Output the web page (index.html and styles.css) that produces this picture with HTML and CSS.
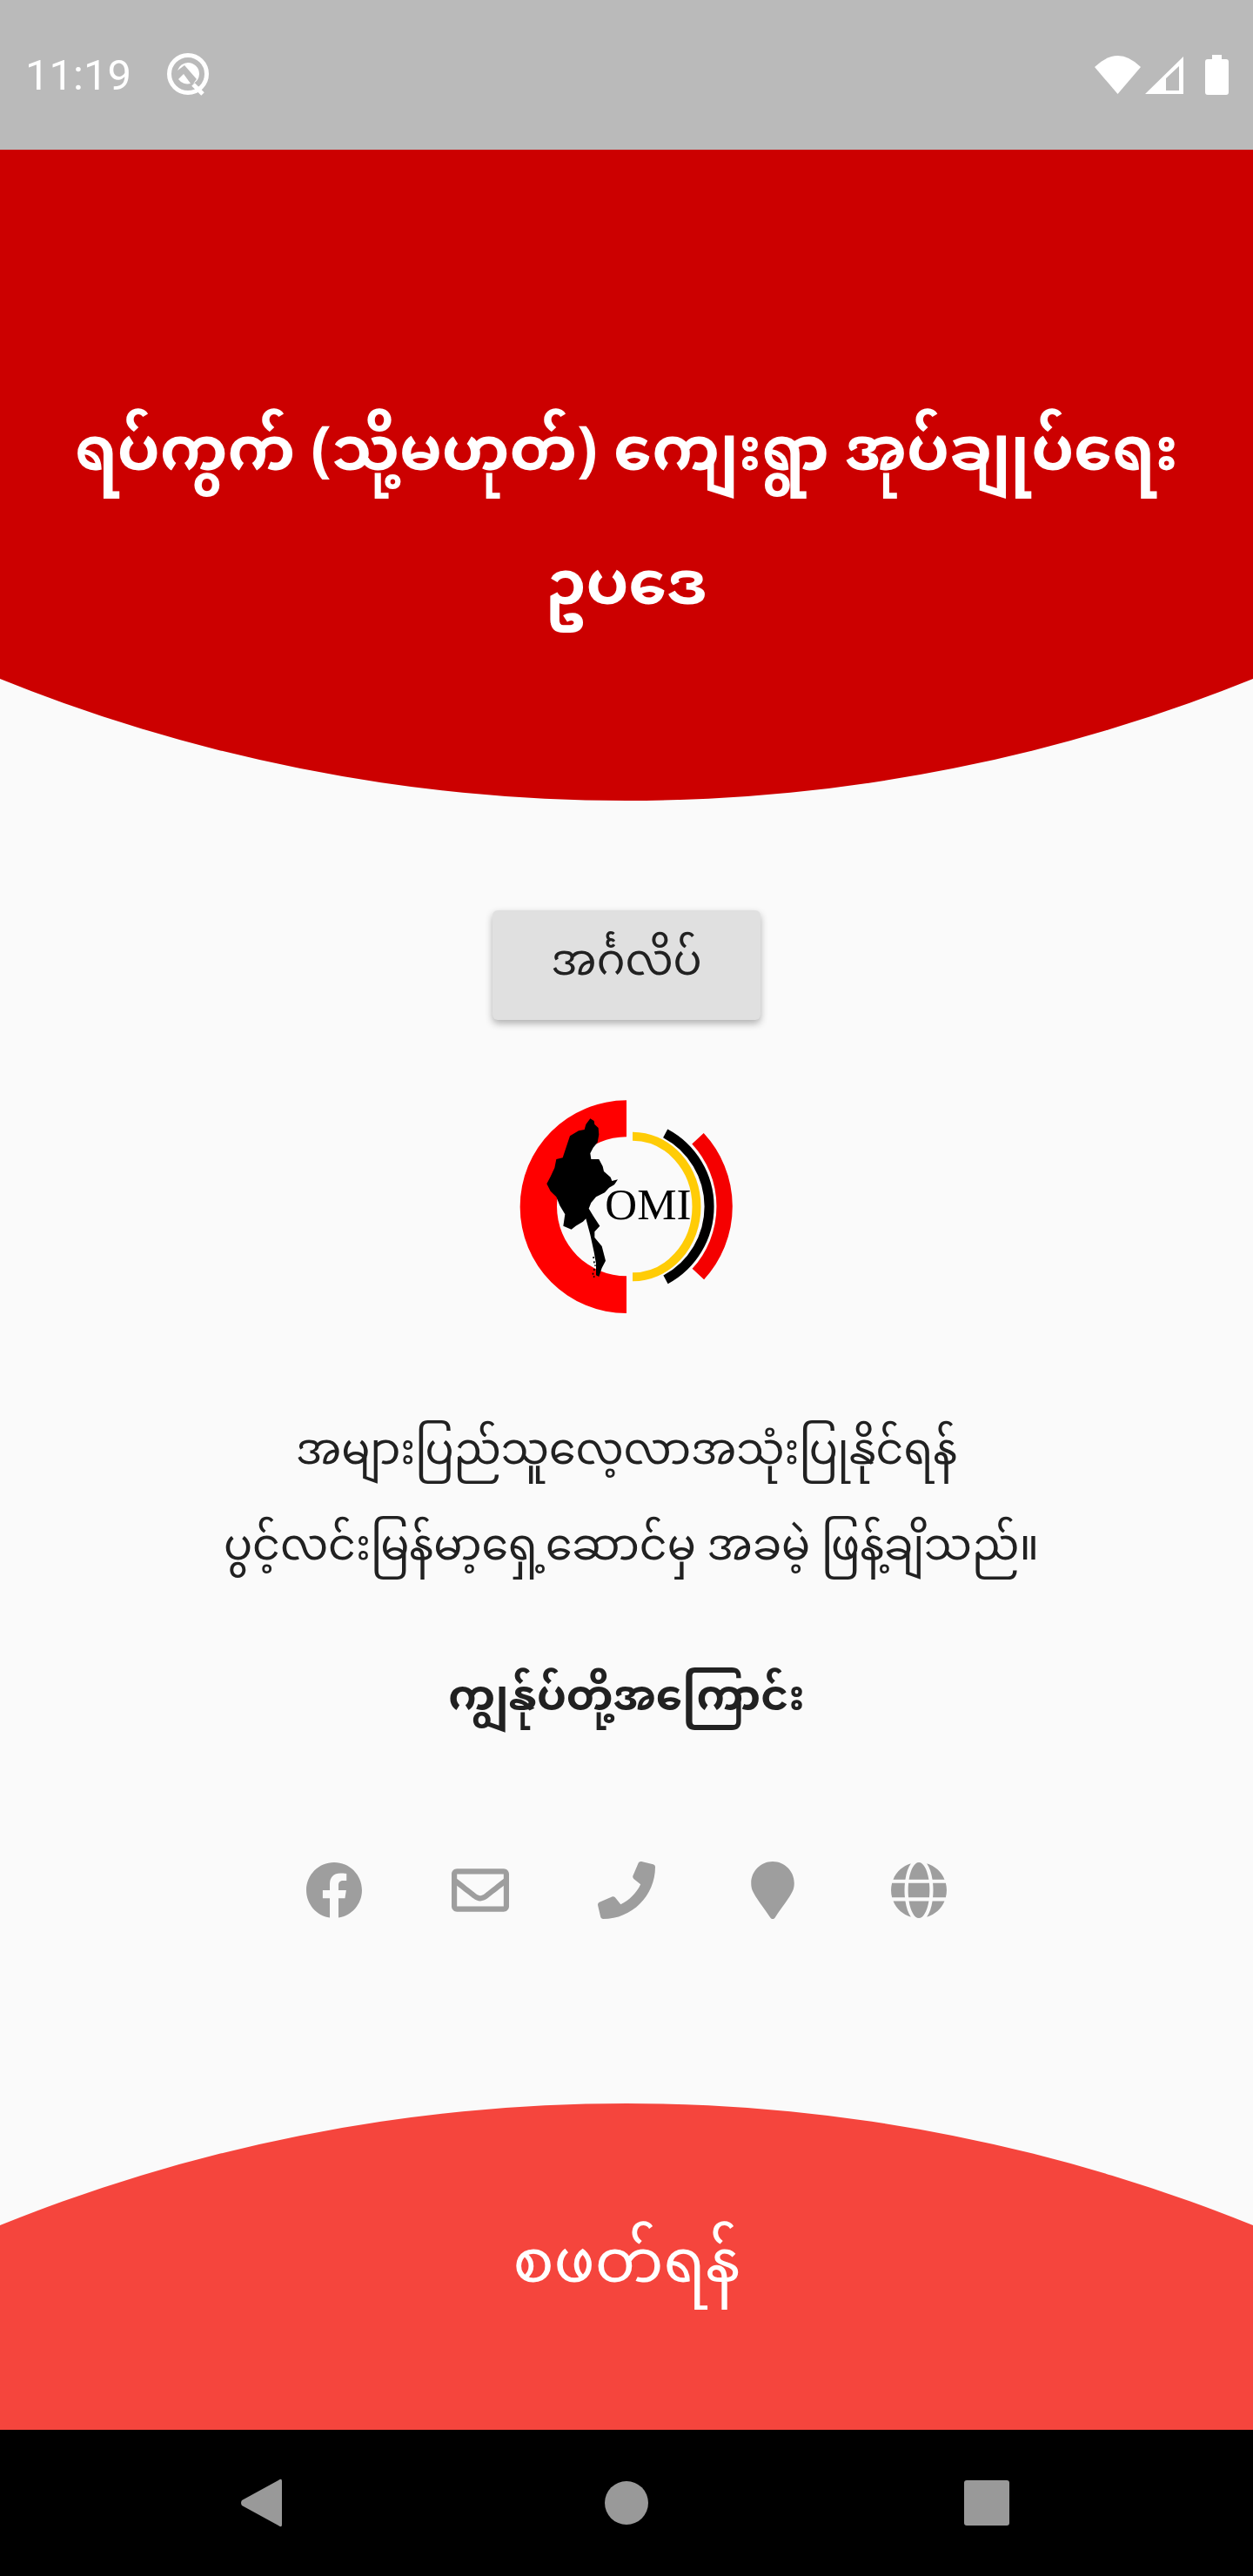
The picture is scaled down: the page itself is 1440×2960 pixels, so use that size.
FILE: index.html
```html
<!DOCTYPE html>
<html lang="my">
<head>
<meta charset="utf-8">
<title>OMI</title>
<link rel="stylesheet" href="styles.css">
</head>
<body>
<div class="screen">
  <div class="status">
    <span class="time">11:19</span>
    <svg class="sb-dnd" viewBox="0 0 48 50"><circle cx="24" cy="24" r="21.500" fill="none" stroke="#fff" stroke-width="5"/><path d="M30 36 L41 47" stroke="#fff" stroke-width="5"/><path d="M20 14 L34 30 L30 35 A13 13 0 0 0 37 24 A13 13 0 0 0 24 11 A13 13 0 0 0 12 20 Z" fill="#fff"/><path d="M13 30 L19 24 L27 35 A13 13 0 0 1 13 30 Z" fill="#fff"/></svg>
    <span class="spacer"></span>
    <svg class="sb-wifi" viewBox="0 0 53 44"><path d="M26.500 44 L0 13 Q26.500 -13 53 13 Z" fill="#fff"/></svg>
    <svg class="sb-signal" viewBox="0 0 44 43"><path fill-rule="evenodd" d="M44 0 V43 H0 Z M39 11 L24 25 V39 H39 Z" fill="#fff"/></svg>
    <svg class="sb-batt" viewBox="0 0 27 46"><path d="M8 0 H19 V5 H24 Q27 5 27 8 V43 Q27 46 24 46 H3 Q0 46 0 43 V8 Q0 5 3 5 H8 Z" fill="#fff"/></svg>
  </div>
  <header class="hero"><h1>ရပ်ကွက် (သို့မဟုတ်) ကျေးရွာ အုပ်ချုပ်ရေး ဥပဒေ</h1></header>
  <main class="content">
    <button class="lang">အင်္ဂလိပ်</button>
    <svg class="logo" viewBox="165 725 750 750">
      <path d="M540 732 A367 367 0 0 0 540 1466 V1338 A240 240 0 0 1 540 858 Z" fill="#ff0000"/>
      <path d="M561 856 A220 242 0 0 1 561 1341" fill="none" stroke="#ffcc06" stroke-width="30"/>
      <path d="M674 846 A286 286 0 0 1 675 1350" fill="none" stroke="#000" stroke-width="33"/>
      <path d="M786 864 A344 344 0 0 1 787 1331" fill="none" stroke="#f50000" stroke-width="55"/>
      <g transform="translate(240 765)" fill="#000">
        <path d="M175 30 L188 38 L190 50 L203 62 L205 85 L200 112 L185 130 L175 150 L178 170 L205 170 L218 195 L222 212 L245 232 L250 245 L270 240 L258 258 L240 268 L225 285 L195 300 L178 320 L170 340 L185 365 L208 400 L190 420 L190 440 L215 470 L228 520 L215 545 L205 575 L195 570 L195 530 L188 490 L175 430 L160 375 L150 385 L125 400 L110 412 L82 400 L88 360 L70 330 L58 300 L38 280 L25 255 L38 230 L52 200 L58 170 L80 165 L95 120 L105 90 L135 72 L155 68 L160 50 Z"/>
        <rect x="184" y="506" width="5" height="6"/><rect x="186" y="522" width="5" height="6"/><rect x="190" y="534" width="4" height="5"/><rect x="186" y="548" width="5" height="6"/><rect x="182" y="562" width="5" height="6"/><rect x="186" y="572" width="4" height="6"/>
      </g>
      <text x="466" y="1143" class="logo-text">OMI</text>
    </svg>
    <p class="intro">အများပြည်သူလေ့လာအသုံးပြုနိုင်ရန်<span class="intro-line">ပွင့်လင်းမြန်မာ့ရှေ့ဆောင်မှ အခမဲ့ ဖြန့်ချိသည်။</span></p>
    <h2 class="about">ကျွန်ုပ်တို့အကြောင်း</h2>
    <nav class="links">
      <svg viewBox="0 0 512 512"><path d="M504 256C504 119 393 8 256 8S8 119 8 256c0 123.800 90.700 226.400 209.300 245V327.700h-63V256h63v-54.600c0-62.200 37-96.500 93.700-96.500 27.100 0 55.500 4.800 55.500 4.800v61h-31.300c-30.800 0-40.400 19.100-40.400 38.700V256h68.800l-11 71.700h-57.800V501C413.300 482.400 504 379.800 504 256z"/></svg>
      <svg viewBox="0 0 512 512"><path d="M464 64H48C21.500 64 0 85.500 0 112v288c0 26.500 21.500 48 48 48h416c26.500 0 48-21.500 48-48V112c0-26.500-21.500-48-48-48zm0 48v40.800c-22.400 18.300-58.200 46.700-134.600 106.500-16.800 13.200-50.200 45.100-73.400 44.700-23.200.4-56.600-31.500-73.400-44.700C106.200 199.500 70.400 171.100 48 152.800V112h416zM48 400V214.400c22.900 18.300 55.400 43.900 104.900 82.600 21.900 17.200 60.100 55.200 103.100 55 42.700.2 80.500-37.200 103.100-54.900 49.500-38.800 82-64.400 104.900-82.700V400H48z"/></svg>
      <svg viewBox="0 0 512 512"><path d="M493.400 24.600l-104-24c-11.300-2.600-22.900 3.300-27.500 13.900l-48 112c-4.200 9.800-1.400 21.300 6.900 28l60.600 49.600c-36 76.700-98.900 140.500-177.200 177.200l-49.600-60.600c-6.800-8.300-18.200-11.100-28-6.900l-112 48C3.900 366.500-2 378.100.6 389.400l24 104C27.100 504.200 36.700 512 48 512c256.100 0 464-207.500 464-464 0-11.200-7.700-20.900-18.600-23.400z"/></svg>
      <svg viewBox="0 0 384 512"><path d="M172.268 501.670C26.970 291.031 0 269.413 0 192 0 85.961 85.961 0 192 0s192 85.961 192 192c0 77.413-26.970 99.031-172.268 309.670-9.535 13.774-29.930 13.773-39.464 0z"/></svg>
      <svg viewBox="0 0 496 512"><path d="M336.500 160C322 70.700 287.800 8 248 8s-74 62.700-88.500 152h177zM152 256c0 22.200 1.200 43.500 3.300 64h185.300c2.100-20.500 3.300-41.800 3.300-64s-1.200-43.500-3.300-64H155.300c-2.100 20.500-3.300 41.800-3.300 64zm324.700-96c-28.600-67.900-86.500-120.400-158-141.600 24.400 33.800 41.200 84.700 50 141.600h108zM177.200 18.400C105.800 39.600 47.800 92.100 19.300 160h108c8.700-56.900 25.500-107.800 49.900-141.600zM487.400 192H372.700c2.100 21 3.300 42.500 3.300 64s-1.200 43-3.300 64h114.600c5.500-20.500 8.600-41.800 8.600-64s-3.100-43.500-8.500-64zM120 256c0-21.500 1.200-43 3.300-64H8.600C3.200 212.500 0 233.800 0 256s3.200 43.500 8.600 64h114.600c-2-21-3.200-42.500-3.200-64zm39.500 96c14.500 89.300 48.700 152 88.500 152s74-62.700 88.500-152h-177zm159.300 141.600c71.400-21.200 129.400-73.700 158-141.600h-108c-8.800 56.900-25.600 107.800-50 141.600zM19.300 352c28.600 67.900 86.500 120.400 158 141.600-24.400-33.800-41.200-84.700-50-141.600h-108z"/></svg>
    </nav>
  </main>
  <footer class="start"><span>စဖတ်ရန်</span></footer>
  <div class="navbar">
    <svg class="nav-back" viewBox="0 0 50 56"><path d="M48 3 V53 Q48 57 44 54 L2 31 Q0 28 2 25 L44 2 Q48 -1 48 3 Z" fill="#999"/></svg>
    <span class="nav-home"></span>
    <span class="nav-recent"></span>
  </div>
</div>
</body>
</html>
```
FILE: styles.css
```css
* { box-sizing: border-box; }
html, body { margin: 0; padding: 0; }
body { background: #fafafa; font-family: "Noto Sans Myanmar", "Padauk", "Noto Sans", "DejaVu Sans", sans-serif; }
.screen { width: 1440px; height: 2960px; display: flex; flex-direction: column; background: #fafafa; overflow: hidden; }
.status { height: 172px; flex: none; background: #bababa; display: flex; align-items: center; padding: 0 28px 0 29px; color: #fff; }
.time { font-family: Roboto, sans-serif; font-size: 49px; font-weight: 400; line-height: 1; }
.sb-dnd { width: 48px; height: 50px; margin-left: 41px; }
.spacer { flex: 1; }
.sb-wifi { width: 53px; height: 44px; }
.sb-signal { width: 44px; height: 43px; margin-left: 5px; }
.sb-batt { width: 27px; height: 46px; margin-left: 25px; }
.hero { height: 748px; flex: none; background: #cc0000; clip-path: circle(1921px at 50% -1173px); display: flex; align-items: center; justify-content: center; padding: 110px 60px 0; }
.hero h1 { margin: 0; color: #fff; font-size: 70px; font-weight: 700; line-height: 154px; text-align: center; }
.content { flex: 1; display: flex; flex-direction: column; align-items: center; color: #212121; }
.lang { margin-top: 126px; width: 308px; height: 126px; border: 0; border-radius: 6px; background: #e0e0e0; color: #212121; font: inherit; font-size: 49px; box-shadow: 0 4px 8px rgba(0,0,0,.3); padding: 0 0 2px; }
.logo { width: 250px; height: 250px; margin-top: 90px; display: block; }
.logo-text { font-family: "Liberation Serif", serif; font-size: 153px; fill: #000; }
.intro { margin: 104px 0 0; font-size: 49px; line-height: 110px; text-align: center; }
.intro-line { display: block; padding-left: 11px; }
.about { margin: 64px 0 0; font-size: 48.500px; font-weight: 700; line-height: 108px; }
.links { margin-top: 131px; display: flex; gap: 102px; align-items: center; }
.links svg { width: 66px; height: 66px; fill: #9e9e9e; display: block; }
.start { height: 375px; flex: none; background: #f5453d; clip-path: circle(1921px at 50% 1921px); color: #fff; display: flex; align-items: center; justify-content: center; font-size: 70px; padding-top: 2px; }
.navbar { height: 168px; flex: none; background: #000; display: flex; align-items: center; position: relative; padding-left: 276px; }
.nav-back { width: 50px; height: 56px; }
.nav-home { width: 50px; height: 50px; border-radius: 50%; background: #999; position: absolute; left: 695px; }
.nav-recent { width: 52px; height: 52px; border-radius: 3px; background: #999; position: absolute; left: 1108px; }
```
